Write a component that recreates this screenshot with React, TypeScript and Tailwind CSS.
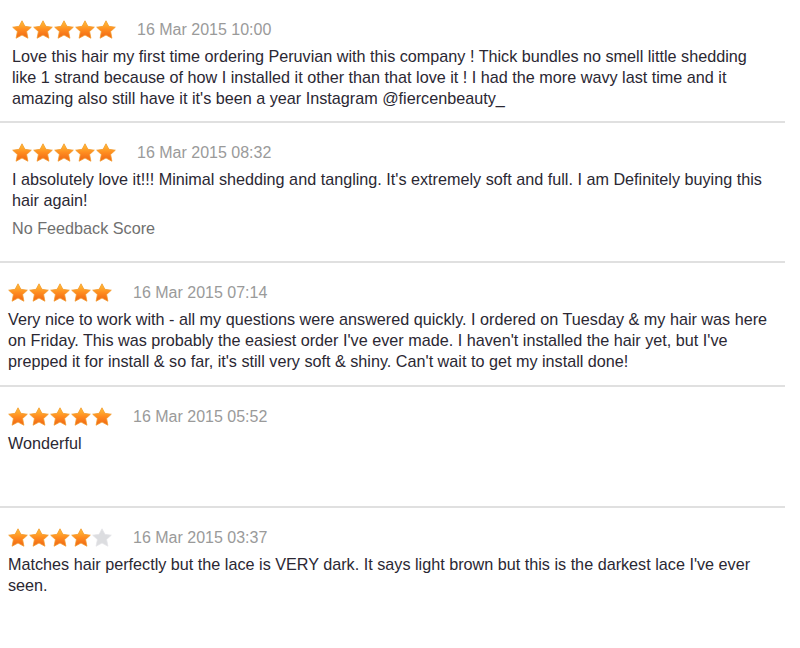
import React from "react";

const Star = ({ filled, id }: { filled: boolean; id: string }) => (
  <svg width="20" height="19" viewBox="0 0 20 19" className="shrink-0">
    <defs>
      <linearGradient id={id} x1="0" y1="0" x2="0" y2="1">
        <stop offset="0" stopColor="#ffc23a" />
        <stop offset="0.5" stopColor="#ff8d20" />
        <stop offset="1" stopColor="#ef6414" />
      </linearGradient>
    </defs>
    <path
      d="M10 0.8 L12.9 6.3 L19.3 7.2 L14.6 11.5 L15.9 18.2 L10 15 L4.1 18.2 L5.4 11.5 L0.7 7.2 L7.1 6.3 Z"
      fill={filled ? `url(#${id})` : "#dcdde0"}
      stroke={filled ? "#f39a2c" : "#e4e5e8"}
      strokeWidth="0.8"
      strokeLinejoin="round"
    />
  </svg>
);

type Review = {
  rating: number;
  date: string;
  text: string;
  extra?: string;
  pl: string;
  h: string;
};

const reviews: Review[] = [
  {
    rating: 5,
    date: "16 Mar 2015 10:00",
    text:
      "Love this hair my first time ordering Peruvian with this company ! Thick bundles no smell little shedding like 1 strand because of how I installed it other than that love it ! I had the more wavy last time and it amazing also still have it it's been a year Instagram @fiercenbeauty_",
    pl: "pl-[12px]",
    h: "h-[123px]",
  },
  {
    rating: 5,
    date: "16 Mar 2015 08:32",
    text:
      "I absolutely love it!!! Minimal shedding and tangling. It's extremely soft and full. I am Definitely buying this hair again!",
    extra: "No Feedback Score",
    pl: "pl-[12px]",
    h: "h-[140px]",
  },
  {
    rating: 5,
    date: "16 Mar 2015 07:14",
    text:
      "Very nice to work with - all my questions were answered quickly. I ordered on Tuesday & my hair was here on Friday. This was probably the easiest order I've ever made. I haven't installed the hair yet, but I've prepped it for install & so far, it's still very soft & shiny. Can't wait to get my install done!",
    pl: "pl-[8px]",
    h: "h-[124px]",
  },
  {
    rating: 5,
    date: "16 Mar 2015 05:52",
    text: "Wonderful",
    pl: "pl-[8px]",
    h: "h-[121px]",
  },
  {
    rating: 4,
    date: "16 Mar 2015 03:37",
    text:
      "Matches hair perfectly but the lace is VERY dark. It says light brown but this is the darkest lace I've ever seen.",
    pl: "pl-[8px]",
    h: "h-[141px]",
  },
];

export default function App() {
  return (
    <div
      className="w-[800px] h-[648px] bg-white overflow-hidden"
      style={{ fontFamily: '"Liberation Sans", Arial, sans-serif' }}
    >
      {reviews.map((r, i) => (
        <div
          key={i}
          className={`w-[785px] ${r.h} ${r.pl} pr-[12px] pt-[20px] ${
            i < reviews.length - 1 ? "border-b-2 border-[#e0e0e0]" : ""
          }`}
        >
          <div className="flex items-center h-[19px]">
            <div className="flex gap-[1px]">
              {[0, 1, 2, 3, 4].map((s) => (
                <Star key={s} filled={s < r.rating} id={`g${i}-${s}`} />
              ))}
            </div>
            <span className="ml-[21px] text-[16px] text-[#9a9a9a] leading-[19px]">
              {r.date}
            </span>
          </div>
          <p className="mt-[7px] text-[16.2px] leading-[21px] text-[#2b2833]">
            {r.text}
          </p>
          {r.extra && (
            <p className="mt-[7px] text-[16.2px] leading-[21px] text-[#707070]">
              {r.extra}
            </p>
          )}
        </div>
      ))}
    </div>
  );
}
